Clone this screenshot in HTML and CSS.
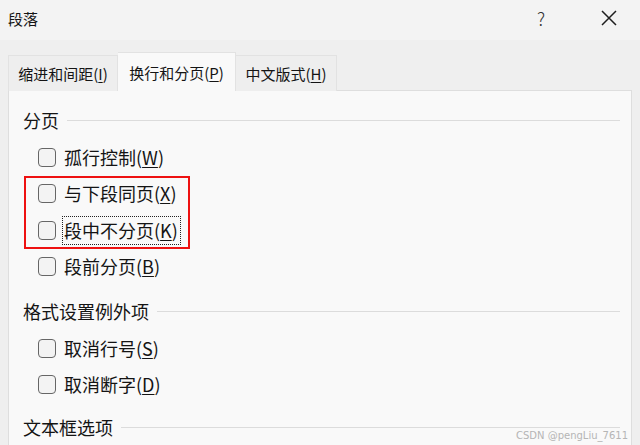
FILE: index.html
```html
<!DOCTYPE html>
<html lang="zh-CN">
<head>
    <meta charset="UTF-8">
    <meta name="viewport" content="width=device-width, initial-scale=1.0">
    <title>段落</title>
    <link rel="stylesheet" href="styles.css">
</head>
<body>
    <div class="dialog">
        <div class="titlebar">
            <span class="title">段落</span>
            <span class="help">?</span>
            <span class="close">
                <svg width="18" height="18" viewBox="0 0 18 18"><path d="M2 2 L16 16 M16 2 L2 16" stroke="#1e1e1e" stroke-width="1.5" fill="none"/></svg>
            </span>
        </div>

        <div class="tabs">
            <div class="tab first">缩进和间距(<u>I</u>)</div>
            <div class="tab active">换行和分页(<u>P</u>)</div>
            <div class="tab last">中文版式(<u>H</u>)</div>
        </div>

        <div class="panel">
            <div class="section">
                <div class="heading"><span>分页</span><i class="rule"></i></div>
                <div class="row"><span class="box"></span><span class="label">孤行控制(<u>W</u>)</span></div>
                <div class="highlight">
                    <div class="row"><span class="box"></span><span class="label">与下段同页(<u>X</u>)</span></div>
                    <div class="row"><span class="box"></span><span class="label focus">段中不分页(<u>K</u>)</span></div>
                </div>
                <div class="row"><span class="box"></span><span class="label">段前分页(<u>B</u>)</span></div>
            </div>

            <div class="section">
                <div class="heading"><span>格式设置例外项</span><i class="rule"></i></div>
                <div class="row"><span class="box"></span><span class="label">取消行号(<u>S</u>)</span></div>
                <div class="row"><span class="box"></span><span class="label">取消断字(<u>D</u>)</span></div>
            </div>

            <div class="section">
                <div class="heading"><span>文本框选项</span><i class="rule"></i></div>
            </div>
        </div>

        <div class="watermark">CSDN @pengLiu_7611</div>
    </div>
</body>
</html>
```

FILE: styles.css
```css
* { box-sizing: border-box; }
html, body { margin: 0; padding: 0; }
body {
    width: 640px;
    height: 445px;
    overflow: hidden;
    background: #efefef;
    font-family: "Noto Sans CJK SC", sans-serif;
    color: #141414;
}
u { text-decoration-thickness: 1px; text-underline-offset: 2px; }

.dialog { position: relative; height: 445px; overflow: hidden; }

.titlebar {
    height: 40px;
    display: flex;
    align-items: center;
    background: #f3f3f3;
    padding-left: 8px;
}
.title { font-size: 15px; flex: 1; margin-top: -4px; }
.help { font-size: 18px; font-weight: 300; width: 20px; margin-right: 43px; margin-top: -4px; color: #333; }
.close { width: 18px; height: 18px; margin-right: 22px; margin-top: -4px; display: flex; }

.tabs {
    display: flex;
    align-items: flex-end;
    padding-left: 8px;
    height: 50px;
}
.tab {
    font-size: 15px;
    white-space: nowrap;
    height: 36px;
    display: flex;
    align-items: center;
    justify-content: center;
    border: 1px solid #e2e2e2;
    border-bottom: none;
    background: #eeeeee;
    margin-bottom: -1px;
    position: relative;
}
.tab.first { width: 110px; }
.tab.active {
    width: 118px;
    height: 39px;
    background: #f9f9f9;
    border-left: none;
    z-index: 1;
}
.tab.last { width: 101px; border-left: none; }

.panel {
    margin: 0 8px;
    height: 360px;
    background: #f9f9f9;
    border: 1px solid #dedede;
    padding: 11px 11px 0 14px;
}

.section { margin-bottom: 6px; }
.section:first-child { margin-bottom: 8px; }
.heading {
    display: flex;
    align-items: center;
    height: 36px;
    margin-bottom: 1px;
    font-size: 18px;
}
.rule {
    flex: 1;
    height: 1px;
    background: #dcdcdc;
    margin-left: 8px;
    margin-top: 1px;
}

.row {
    display: flex;
    align-items: center;
    height: 36.5px;
    padding-left: 15px;
    font-size: 18px;
}
.box {
    width: 18px;
    height: 19px;
    border: 1px solid #666;
    border-radius: 4px;
    background: #f3f3f3;
    margin-right: 8px;
}
.label { line-height: 25px; }
.focus {
    outline: 1px dotted #222;
    outline-offset: 1px;
    padding-right: 1px;
}

.highlight {
    width: 166px;
    margin-left: 1px;
    outline: 2px solid #ee1111;
    outline-offset: -2px;
}
.highlight .row { padding-left: 14px; }

.watermark {
    position: absolute;
    right: 12px;
    bottom: 4px;
    font-family: "DejaVu Sans", sans-serif;
    font-size: 10px;
    color: #b5b5b5;
}
```
